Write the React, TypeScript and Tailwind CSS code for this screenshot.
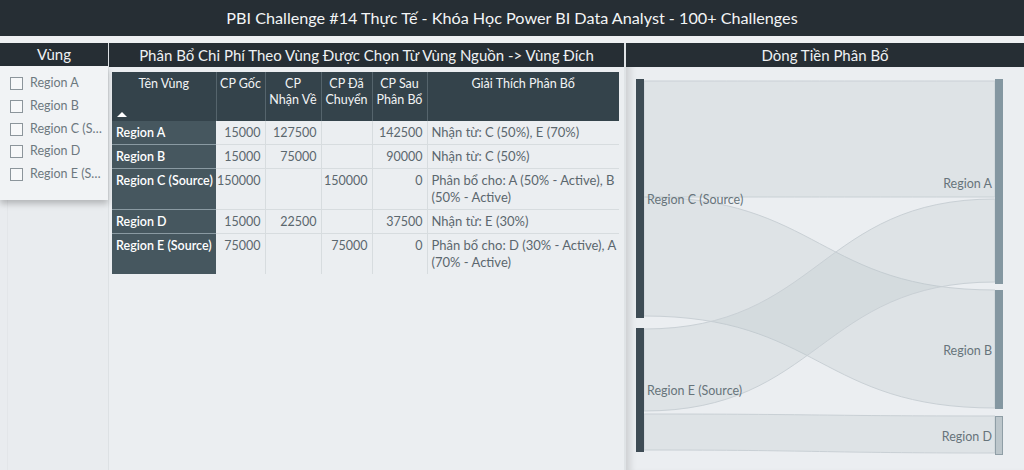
import React from "react";

const FONT = { fontFamily: "Lato, 'Noto Sans', sans-serif" };

const REGIONS = ["Region A", "Region B", "Region C (Source)", "Region D", "Region E (Source)"];

type Row = {
  name: string;
  goc: string;
  nhan: string;
  chuyen: string;
  sau: string;
  note: string;
};

const ROWS: Row[] = [
  { name: "Region A", goc: "15000", nhan: "127500", chuyen: "", sau: "142500", note: "Nhận từ: C (50%), E (70%)" },
  { name: "Region B", goc: "15000", nhan: "75000", chuyen: "", sau: "90000", note: "Nhận từ: C (50%)" },
  { name: "Region C (Source)", goc: "150000", nhan: "", chuyen: "150000", sau: "0", note: "Phân bổ cho: A (50% - Active), B (50% - Active)" },
  { name: "Region D", goc: "15000", nhan: "22500", chuyen: "", sau: "37500", note: "Nhận từ: E (30%)" },
  { name: "Region E (Source)", goc: "75000", nhan: "", chuyen: "75000", sau: "0", note: "Phân bổ cho: D (30% - Active), A (70% - Active)" },
];

// sankey bands: [leftTop, leftBottom, rightTop, rightBottom]
const FLOWS: [number, number, number, number][] = [
  [14, 130, 14, 130],
  [130, 249, 223, 341],
  [262, 344, 132, 215],
  [347, 383, 349, 386],
];

function band(x0: number, x1: number, f: [number, number, number, number]) {
  const [a, b, c, d] = f;
  const m = (x0 + x1) / 2;
  return `M${x0},${a} C${m},${a} ${m},${c} ${x1},${c} L${x1},${d} C${m},${d} ${m},${b} ${x0},${b} Z`;
}

function Sankey() {
  return (
    <svg width="398" height="403" className="block">
      {FLOWS.map((f, i) => (
        <path key={i} d={band(18, 369, f)} fill="#b9c3c9" fillOpacity={0.25} stroke="#c9d0d5" strokeWidth={1} />
      ))}
      <rect x="10" y="12" width="8" height="239" fill="#3e4c55" />
      <rect x="10" y="261" width="8" height="124" fill="#3e4c55" />
      <rect x="369" y="12" width="8" height="205" fill="#8497a1" />
      <rect x="369" y="223" width="8" height="119" fill="#8497a1" />
      <rect x="369.5" y="349.5" width="7" height="38" fill="#bcc6cb" stroke="#8f9ea6" />
      <g fontSize="12.5" fill="#67747b" style={FONT}>
        <text x="21" y="137">Region C (Source)</text>
        <text x="21" y="328">Region E (Source)</text>
        <text x="366" y="121" textAnchor="end">Region A</text>
        <text x="366" y="288" textAnchor="end">Region B</text>
        <text x="366" y="374" textAnchor="end">Region D</text>
      </g>
    </svg>
  );
}

function Table() {
  const head =
    "bg-[#34434b] text-[#f2f4f5] font-normal align-top text-center px-0 pt-[4px] text-[12.5px] leading-[16px] whitespace-nowrap border-r border-[#55646c]";
  const num = "text-right pr-[4px] align-top pt-[3px] pb-[3px] border-r border-[#d7dcdf]";
  return (
    <table className="border-collapse text-[12.5px] leading-[17px] table-fixed" style={{ width: 507 }}>
      <colgroup>
        <col style={{ width: 104 }} />
        <col style={{ width: 49 }} />
        <col style={{ width: 56 }} />
        <col style={{ width: 51 }} />
        <col style={{ width: 55 }} />
        <col style={{ width: 192 }} />
      </colgroup>
      <thead>
        <tr className="h-[49px]">
          <th className={head}>
            <div className="flex h-[45px] flex-col justify-between">
              <span>Tên Vùng</span>
              <span className="mb-[4px] ml-[5px] h-0 w-0 border-x-[5px] border-b-[5px] border-x-transparent border-b-white" />
            </div>
          </th>
          <th className={head}>CP Gốc</th>
          <th className={head}>
            CP
            <br />
            Nhận Về
          </th>
          <th className={head}>
            CP Đã
            <br />
            Chuyển
          </th>
          <th className={head}>
            CP Sau
            <br />
            Phân Bổ
          </th>
          <th className={head + " border-r-0"}>Giải Thích Phân Bổ</th>
        </tr>
      </thead>
      <tbody className="text-[#5b676e]">
        {ROWS.map((r, i) => (
          <tr key={r.name} className={i < ROWS.length - 1 ? "border-b border-[#d7dcdf]" : ""}>
            <td
              className={`bg-[#46575f] text-white text-[12.5px] font-semibold whitespace-nowrap overflow-hidden pl-[4px] align-top pt-[3px] pb-[3px] ${
                i < ROWS.length - 1 ? "border-b border-[#8a9aa2]" : ""
              }`}
            >
              {r.name}
            </td>
            <td className={num}>{r.goc}</td>
            <td className={num}>{r.nhan}</td>
            <td className={num}>{r.chuyen}</td>
            <td className={num}>{r.sau}</td>
            <td className="pl-[4px] pr-[2px] align-top pt-[3px] pb-[3px] text-[13px]">{r.note}</td>
          </tr>
        ))}
      </tbody>
    </table>
  );
}

export default function App() {
  return (
    <div className="flex h-[470px] w-[1024px] flex-col overflow-hidden bg-[#eef0f2]" style={FONT}>
      <div className="flex h-[36px] items-center justify-center bg-[#262e34] text-[16.2px] text-[#f3f5f6]">
        PBI Challenge #14 Thực Tế - Khóa Học Power BI Data Analyst - 100+ Challenges
      </div>
      <div className="h-[7px]" />
      <div className="flex min-h-0 flex-1">
        {/* slicer */}
        <div className="flex w-[108px] flex-col bg-[#e9ecef]">
          <div className="flex h-[23px] items-center justify-center bg-[#262e34] text-[15px] text-[#eef1f3]">Vùng</div>
          <div className="relative z-10 flex h-[134px] flex-col gap-[5.75px] bg-[#f1f3f5] pl-[10px] pr-[3px] pt-[9px] shadow-[0_4px_6px_rgba(0,0,0,0.22)]">
            {REGIONS.map((r) => (
              <div key={r} className="flex h-[17px] items-center gap-[7px]">
                <span className="h-[13px] w-[13px] shrink-0 border border-[#8c959b] bg-[#f7f8f9]" />
                <span className="truncate text-[12.5px] text-[#6d787f]">{r}</span>
              </div>
            ))}
          </div>
          <div className="ml-[7px] flex-1 border-l border-[#e3e6e9]" />
        </div>
        <div className="w-px bg-[#dde1e4]" />
        {/* table */}
        <div className="flex w-[516px] flex-col bg-[#ebeef1]">
          <div className="flex h-[24px] items-center justify-center bg-[#262e34] text-[15px] text-[#eef1f3]">
            Phân Bổ Chi Phí Theo Vùng Được Chọn Từ Vùng Nguồn -&gt; Vùng Đích
          </div>
          <div className="pl-[3px] pt-[5px]">
            <Table />
          </div>
        </div>
        <div className="w-[2px] bg-[#dfe3e6]" />
        {/* sankey */}
        <div className="flex flex-1 flex-col bg-[#ebeef1]">
          <div className="flex h-[24px] items-center justify-center bg-[#262e34] text-[15px] text-[#eef1f3]">Dòng Tiền Phân Bổ</div>
          <div className="flex-1 shadow-[inset_9px_0_7px_-5px_rgba(0,0,0,0.13)]">
            <Sankey />
          </div>
        </div>
      </div>
    </div>
  );
}
